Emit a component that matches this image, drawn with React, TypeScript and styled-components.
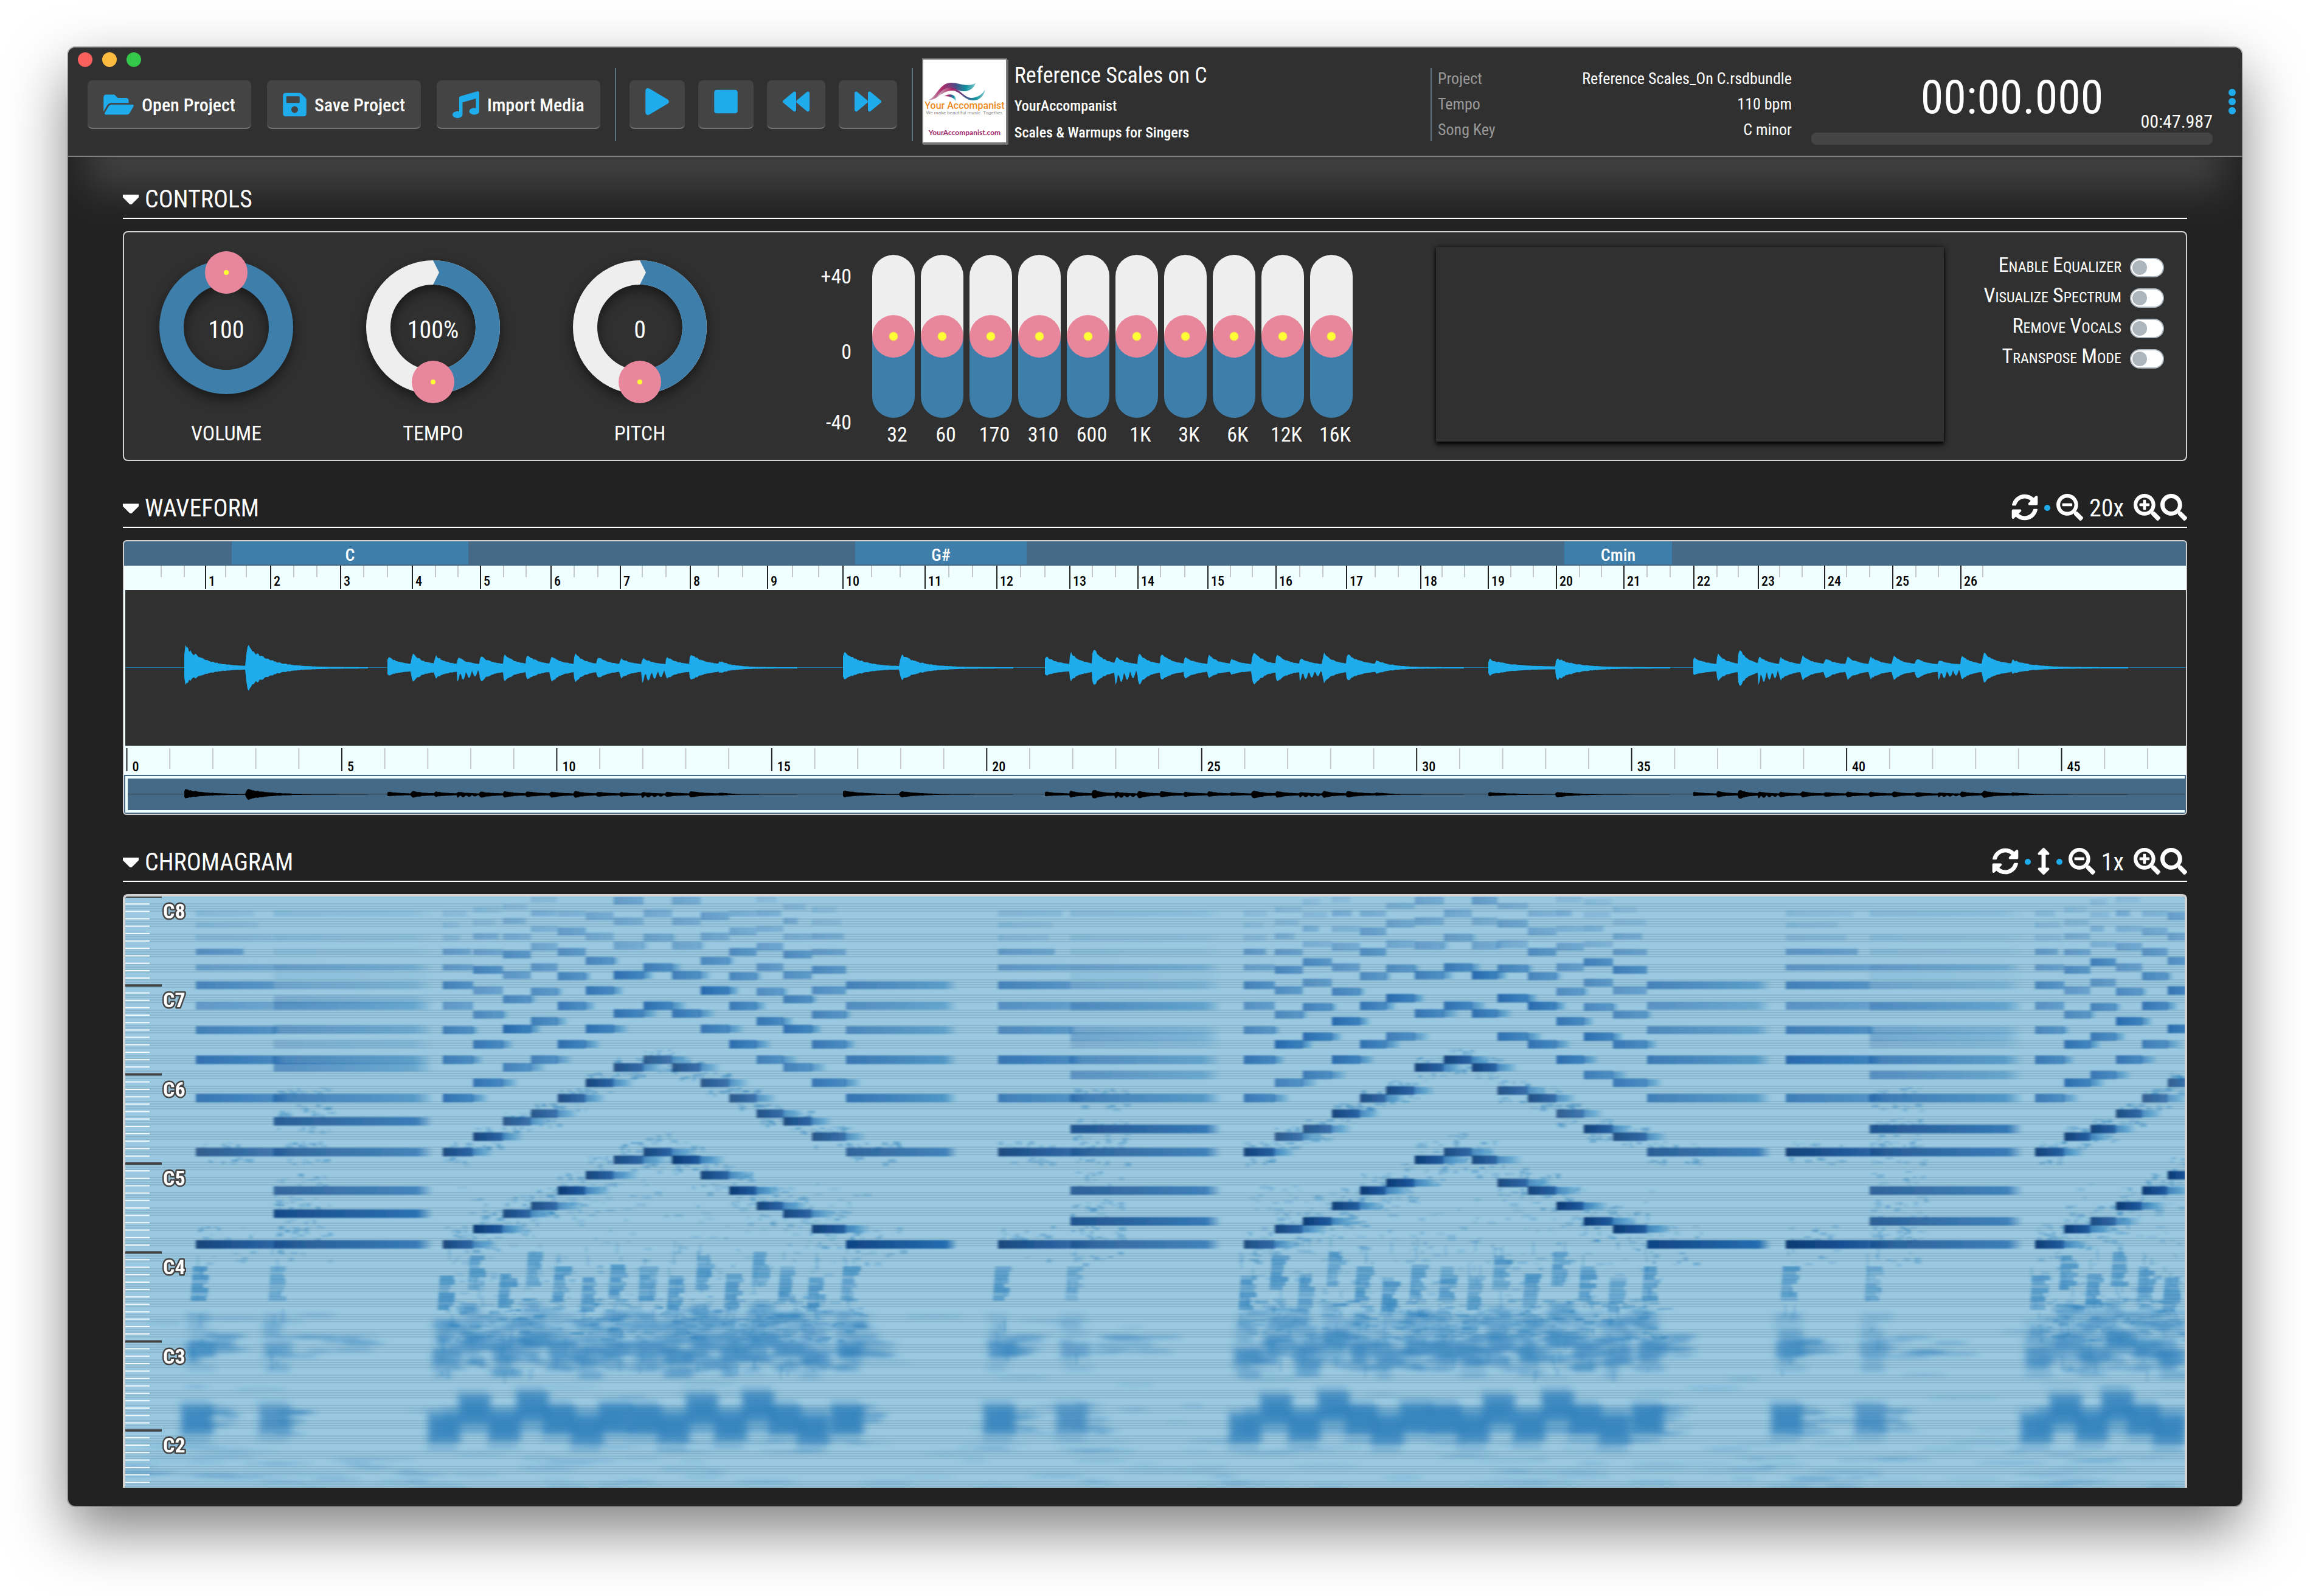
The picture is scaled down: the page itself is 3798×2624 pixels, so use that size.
import React from "react";
import styled, { createGlobalStyle } from "styled-components";
import {
  FaFolderOpen,
  FaSave,
  FaMusic,
  FaPlay,
  FaStop,
  FaBackward,
  FaForward,
  FaSyncAlt,
  FaSearch,
  FaSearchMinus,
  FaSearchPlus,
  FaArrowsAltV,
} from "react-icons/fa";

const color = {
  accent: "#1facec",
  panel: "#303030",
  page: "#222222",
  button: "#444444",
  line: "#7f7f7f",
  frame: "#d3d3d3",
  ruler: "#f0ffff",
  band: "#456a87",
  fill: "#3d7eaa",
  track: "#eeeeee",
  knob: "#e8879b",
  dot: "#ffff33",
};

const GlobalStyle = createGlobalStyle`
  *, *::before, *::after { box-sizing: border-box; }
  body {
    margin: 0;
    padding: 78px 112px 148px;
    background: #ffffff;
    color: #ffffff;
    font-family: "Roboto Condensed", Roboto, sans-serif;
  }
  button, input { font: inherit; color: inherit; }
`;

const Window = styled.div`
  background: ${color.page};
  border-radius: 12px;
  overflow: hidden;
  box-shadow: 0 0 0 2px rgba(0, 0, 0, 0.22), 0 40px 96px rgba(0, 0, 0, 0.5);
`;

/* ---------- header ---------- */

const Header = styled.header`
  display: flex;
  align-items: flex-start;
  padding: 8px 10px 18px 16px;
  background: ${color.panel};
  border-bottom: 2px solid ${color.line};
  box-shadow: 0 86px 60px -30px #404040;
`;

const Lights = styled.div`
  display: flex;
  gap: 16px;
  margin-bottom: 22px;
`;

const Light = styled.span<{ $color: string }>`
  width: 24px;
  height: 24px;
  border-radius: 50%;
  background: ${(p) => p.$color};
`;

const FileButtons = styled.div`
  display: flex;
  gap: 26px;
  padding-left: 16px;
`;

const Button = styled.button<{ $icon: number }>`
  display: flex;
  align-items: center;
  gap: 13px;
  height: 80px;
  padding: 2px 26px 0;
  border: 0;
  border-bottom: 2px solid #757575;
  border-radius: 8px;
  background: ${color.button};
  font-size: 30px;
  font-weight: 500;
  white-space: nowrap;

  svg {
    color: ${color.accent};
    width: ${(p) => p.$icon}px;
    height: 44px;
    flex: none;
  }
`;

const TransportButton = styled(Button)`
  align-items: flex-start;
  padding-top: 13px;
`;

const Deck = styled.div`
  flex: 1;
  display: flex;
  align-items: center;
  min-width: 0;
  height: 142px;
  margin: 10px 0 0 24px;
`;

const Divider = styled.div`
  flex: none;
  width: 2px;
  height: 120px;
  margin-top: 10px;
  background: #5f7280;
`;

const Transport = styled.div`
  display: flex;
  gap: 22px;
  margin: 10px 24px 0 22px;
`;

const Cover = styled.div`
  flex: none;
  width: 140px;
  height: 140px;
  margin-left: 15px;
  align-self: flex-start;
  background: #ffffff;
  border: 2px solid ${color.line};
  box-shadow: 2px 2px 0 #6d6d6d;

  svg {
    display: block;
  }
`;

const SongInfo = styled.div`
  flex: 1;
  min-width: 0;
  align-self: flex-start;
  padding-left: 12px;
  white-space: nowrap;
`;

const SongTitle = styled.h1`
  margin: 0;
  font-size: 36px;
  font-weight: 400;
  line-height: 56px;
`;

const SongLine = styled.p`
  margin: 0;
  font-size: 24px;
  font-weight: 500;
  line-height: 44px;
`;

const Facts = styled.dl`
  display: grid;
  grid-template-columns: auto 1fr;
  width: 582px;
  margin: 8px 0 0 10px;
  font-size: 26px;
  line-height: 42px;
`;

const FactName = styled.dt`
  color: #999999;
`;

const FactValue = styled.dd`
  margin: 0;
  text-align: right;
`;

const Clock = styled.div`
  width: 660px;
  margin: 39px 26px 0 32px;
  align-self: flex-start;
`;

const Elapsed = styled.div`
  font-size: 76px;
  line-height: 50px;
  text-align: center;
`;

const Total = styled.div`
  font-size: 30px;
  line-height: 30px;
  text-align: right;
`;

const Progress = styled.progress`
  appearance: none;
  display: block;
  width: 100%;
  height: 20px;
  margin-top: 3px;
  border: 0;
  border-radius: 8px;
  background: ${color.button};
  overflow: hidden;

  &::-webkit-progress-bar {
    background: ${color.button};
  }
  &::-webkit-progress-value {
    background: ${color.accent};
  }
`;

const MenuButton = styled.button`
  display: flex;
  flex-direction: column;
  gap: 3px;
  padding: 0;
  border: 0;
  background: none;
`;

const MenuDot = styled.span`
  width: 12px;
  height: 12px;
  border-radius: 50%;
  background: ${color.accent};
`;

/* ---------- sections ---------- */

const Main = styled.main`
  display: flex;
  flex-direction: column;
  gap: 54px;
  padding: 46px 90px 30px;
`;

const SectionHead = styled.div`
  display: flex;
  justify-content: space-between;
  padding-bottom: 6px;
  margin-bottom: 20px;
  border-bottom: 2px solid #ffffff;
`;

const Collapse = styled.button`
  display: flex;
  align-items: center;
  gap: 10px;
  padding: 0;
  border: 0;
  background: none;
  font-size: 40px;
  line-height: 48px;
`;

const SectionTitle = styled.h2`
  margin: 0;
  font: inherit;
`;

const Tools = styled.div`
  display: flex;
  align-items: flex-start;
  gap: 10px;
  font-size: 40px;
  line-height: 48px;
`;

const ToolButton = styled.button<{ $icon?: number }>`
  display: block;
  padding: 0;
  border: 0;
  background: none;

  svg {
    display: block;
    width: ${(p) => p.$icon ?? 44}px;
    height: 44px;
  }
`;

const ToolDot = styled.span`
  width: 10px;
  height: 10px;
  margin-top: 18px;
  border-radius: 50%;
  background: ${color.accent};
`;

const ZoomValue = styled.span`
  margin-right: 6px;
`;

const ToolPair = styled.div`
  display: flex;
`;

/* ---------- controls ---------- */

const ControlsPanel = styled.div`
  display: flex;
  align-items: flex-start;
  padding: 24px 36px 22px 58px;
  border: 2px solid ${color.frame};
  border-radius: 8px;
  background: ${color.panel};
`;

const Dials = styled.div`
  display: flex;
  gap: 120px;
  padding-top: 22px;
`;

const DialBox = styled.label`
  display: grid;
  justify-items: center;
  row-gap: 44px;
  width: 220px;
  font-size: 34px;
  line-height: 40px;

  svg,
  input {
    grid-area: 1 / 1;
    width: 220px;
    height: 220px;
    margin: 0;
  }
  svg {
    overflow: visible;
  }
  input {
    opacity: 0;
  }
`;

const Ring = styled.g`
  filter: drop-shadow(0 8px 10px rgba(0, 0, 0, 0.5));
`;

const DialValue = styled.text`
  font-size: 40px;
  fill: #ffffff;
  text-anchor: middle;
`;

const Equalizer = styled.div`
  display: flex;
  gap: 34px;
  margin: 13px 0 0 182px;
  font-size: 34px;
  line-height: 40px;
`;

const Scale = styled.div`
  display: grid;
  grid-template-rows: 124px 116px 40px;
  width: 56px;
  padding-top: 15px;
  text-align: right;
`;

const Bands = styled.div`
  display: flex;
  gap: 10px;
`;

const Band = styled.label`
  display: flex;
  flex-direction: column;
  gap: 7px;
  width: 70px;
`;

const BandName = styled.span`
  padding-left: 12px;
  text-align: center;
  white-space: nowrap;
`;

const BandSlider = styled.input`
  appearance: none;
  writing-mode: vertical-lr;
  direction: rtl;
  display: block;
  width: 70px;
  height: 268px;
  margin: 0;
  border-radius: 35px;
  background: linear-gradient(${color.track} 50%, ${color.fill} 50%);

  &::-webkit-slider-thumb {
    appearance: none;
    width: 70px;
    height: 70px;
    border-radius: 50%;
    background: radial-gradient(circle, ${color.dot} 6px, ${color.knob} 8px);
  }
`;

const Spectrum = styled.div`
  flex: 1;
  height: 320px;
  margin: 0 62px 0 137px;
  background: ${color.panel};
  box-shadow: 0 5px 7px rgba(0, 0, 0, 0.85), 0 0 6px rgba(0, 0, 0, 0.7);
`;

const Switches = styled.div`
  width: 300px;
  padding-top: 6px;
`;

const SwitchRow = styled.label`
  display: flex;
  align-items: center;
  justify-content: flex-end;
  gap: 14px;
  height: 50px;
`;

const SwitchName = styled.span`
  display: flex;
  align-items: baseline;
  gap: 7px;
  font-size: 24px;
  line-height: 50px;
  text-transform: uppercase;
  white-space: nowrap;
`;

const Word = styled.span`
  display: inline-block;

  &::first-letter {
    font-size: 34px;
  }
`;

const Switch = styled.input`
  appearance: none;
  flex: none;
  display: flex;
  width: 56px;
  height: 32px;
  margin: 6px 0 0;
  padding: 2px;
  border: 2px solid #adb5bd;
  border-radius: 16px;
  background: #ffffff;

  &::before {
    content: "";
    width: 24px;
    height: 24px;
    border-radius: 50%;
    background: #adb5bd;
  }
  &:checked {
    justify-content: flex-end;
  }
`;

/* ---------- waveform ---------- */

const WavePanel = styled.div`
  border: 2px solid ${color.frame};
  border-radius: 6px;
  background: ${color.ruler};
  overflow: hidden;

  svg {
    display: block;
  }
`;

const KeyBand = styled.div`
  display: flex;
  height: 40px;
  background: ${color.band};
`;

const KeySpan = styled.div<{ $size: number; $named: boolean }>`
  flex: ${(p) => p.$size} 0 0;
  height: 38px;
  background: ${(p) => (p.$named ? color.fill : "none")};
  font-size: 28px;
  font-weight: 500;
  line-height: 46px;
  text-align: center;
`;

const Ruler = styled.svg<{ $height: number }>`
  width: 100%;
  height: ${(p) => p.$height}px;
`;

const RulerText = styled.text`
  font-size: 22px;
  font-weight: 500;
  fill: #000000;
`;

const WaveView = styled.div`
  margin-left: 2px;
  background: ${color.panel};
`;

const Overview = styled.div`
  padding: 2px;
  background: ${color.band};
`;

const Viewport = styled.div`
  border: 4px solid ${color.ruler};
  border-right: 0;
`;

/* ---------- chromagram ---------- */

const ChromaPanel = styled.div`
  position: relative;
  border: 4px solid ${color.frame};
  border-bottom: 0;
  border-radius: 8px 8px 0 0;
  overflow: hidden;

  svg {
    display: block;
    width: 100%;
    height: 972px;
  }
`;

const OctaveScale = styled.div`
  position: absolute;
  inset: 0;
`;

const OctaveText = styled.text`
  font-size: 34px;
  font-weight: 700;
  fill: #ffffff;
  stroke: #444444;
  stroke-width: 5px;
  stroke-linejoin: round;
  paint-order: stroke;
`;

/* ---------- data ---------- */

function makeRandom(seed: number) {
  let s = seed;
  return () => {
    s = (s * 1664525 + 1013904223) % 4294967296;
    return s / 4294967296;
  };
}

const PANEL_LEFT = 204;
const PANEL_WIDTH = 3390;
const pct = (x: number) => `${((x - PANEL_LEFT) / PANEL_WIDTH) * 100}%`;

const keySpans: [number, string][] = [
  [177, ""],
  [389, "C"],
  [636, ""],
  [282, "G#"],
  [884, ""],
  [177, "Cmin"],
  [845, ""],
];

const barTicks = [
  338, 445, 560, 678, 790, 906, 1020, 1135, 1262, 1386, 1521, 1639, 1759, 1871, 1986, 2098, 2214,
  2336, 2447, 2559, 2670, 2785, 2891, 3000, 3112, 3224,
];

const beatTicks = [
  265, 303, 371, 405, 483, 521, 598, 637, 716, 753, 828, 865, 944, 983, 1056, 1095, 1181, 1221,
  1303, 1346, 1433, 1480, 1560, 1599, 1678, 1718, 1796, 1834, 1908, 1948, 2023, 2059, 2137, 2175,
  2261, 2299, 2371, 2408, 2484, 2521, 2597, 2633, 2708, 2746, 2823, 2858, 2926, 2963, 3036, 3074,
  3150, 3187, 3260,
];

type Pluck = [x: number, up: number, down: number, ripple?: boolean];

const phrases: { end: number; rest: number; plucks: Pluck[] }[] = [
  { end: 606, rest: 2, plucks: [[303, 38, 28], [405, 40, 40]] },
  {
    end: 1313,
    rest: 5,
    plucks: [
      [637, 20, 14], [677, 26, 25], [715, 22, 19], [752, 19, 23, true], [789, 21, 25],
      [828, 25, 25], [865, 24, 22], [905, 21, 26], [944, 25, 25], [982, 20, 19], [1020, 17, 19],
      [1056, 17, 25, true], [1095, 20, 20], [1134, 25, 23], [1181, 13, 10],
    ],
  },
  { end: 1668, rest: 2, plucks: [[1386, 30, 22], [1480, 24, 22]] },
  {
    end: 2408,
    rest: 5,
    plucks: [
      [1718, 21, 14], [1759, 28, 24], [1796, 35, 33], [1834, 19, 28, true], [1871, 26, 31],
      [1908, 26, 23], [1947, 20, 20], [1986, 23, 18], [2023, 16, 12], [2059, 29, 32],
      [2098, 25, 26], [2137, 17, 22, true], [2175, 26, 26], [2214, 25, 23], [2261, 14, 11],
    ],
  },
  { end: 2748, rest: 2, plucks: [[2447, 15, 13], [2558, 17, 22]] },
  {
    end: 3500,
    rest: 5,
    plucks: [
      [2784, 19, 13], [2823, 25, 23], [2858, 34, 35], [2891, 20, 28, true], [2926, 19, 22],
      [2962, 22, 22], [3000, 17, 20], [3036, 20, 21], [3074, 20, 20], [3112, 21, 21],
      [3150, 16, 19], [3187, 14, 20, true], [3224, 22, 21], [3260, 27, 26], [3307, 14, 10],
    ],
  },
];

function wavePath(left: number, mid: number, gain: number) {
  const random = makeRandom(7);
  return phrases
    .map(({ end, rest, plucks }) => {
      const top: string[] = [];
      const bottom: string[] = [];
      const dense = plucks.length > 2;
      plucks.forEach(([x, up, down, ripple], i) => {
        const last = i === plucks.length - 1;
        const next = last ? end : plucks[i + 1][0];
        const floor = last ? 1 : rest;
        const rate = last ? 6 : dense ? 1.9 : 3;
        for (let at = x; at < next; at += 2) {
          const t = (at - x) / (next - x);
          const attack = at === x ? 0.6 : 1;
          const decay = Math.exp(-rate * t) * (0.86 + random() * 0.22) * attack * (last ? 1 : 1 - 0.3 * t);
          const wobble = ripple ? 0.25 + 0.75 * Math.abs(Math.cos(t * 12)) : 1;
          const upper = floor + (up - floor) * decay;
          const lower = floor + (down - floor) * (ripple ? Math.exp(-0.8 * t) : decay);
          top.push(`${at - left},${(mid - upper * gain).toFixed(1)}`);
          bottom.unshift(`${at - left},${(mid + lower * gain * wobble).toFixed(1)}`);
        }
      });
      return `M${top.join("L")}L${bottom.join("L")}Z`;
    })
    .join("");
}

const bigWave = wavePath(206, 128, 1);
const smallWave = wavePath(210, 26, 0.24);

/* Spectrogram: each note is drawn with its first twelve partials. */

const CHROMA_LEFT = 206;
const CHROMA_WIDTH = 3386;
const CHROMA_HEIGHT = 972;
const OCTAVE = 151.8;
const ROOT_Y = 572;

type Note = { x: number; end: number; semi: number; kind: "root" | "scale" | "held" | "chord" };

const major = [0, 2, 4, 5, 7, 9, 11, 12, 11, 9, 7, 5, 4, 2, 0];
const minor = [0, 2, 3, 5, 7, 8, 11, 12, 11, 8, 7, 5, 3, 2, 0];

function scaleNotes(starts: number[], semis: number[], end: number): Note[] {
  return starts.map((x, i) => ({
    x,
    end: i + 1 < starts.length ? starts[i + 1] : end,
    semi: semis[i],
    kind: i === 14 ? "held" : "scale",
  }));
}

function chordNotes(x: number, end: number, semis: number[]): Note[] {
  return semis.map((semi) => ({ x, end, semi, kind: "chord" as const }));
}

const notes: Note[] = [
  { x: 322, end: 450, semi: 0, kind: "root" },
  ...chordNotes(450, 712, [0, 4, 7]),
  ...scaleNotes(
    [728, 778, 827, 873, 917, 963, 1009, 1058, 1105, 1152, 1199, 1244, 1288, 1335, 1391],
    major,
    1574,
  ),
  { x: 1641, end: 1760, semi: 0, kind: "root" },
  ...chordNotes(1760, 2008, [0, 3, 7]),
  ...scaleNotes(
    [2045, 2096, 2142, 2190, 2236, 2279, 2326, 2374, 2420, 2462, 2512, 2559, 2604, 2652, 2708],
    minor,
    2912,
  ),
  { x: 2936, end: 3074, semi: 0, kind: "root" },
  ...chordNotes(3074, 3326, [0, 3, 7]),
  ...scaleNotes([3346, 3394, 3437, 3479, 3522, 3564], [0, 2, 3, 5, 7, 9], 3600),
];

const partialLevel = [1, 0.86, 0.8, 0.84, 0.66, 0.54, 0.66, 0.44, 0.5, 0.28, 0.22, 0.28];
const chordLevel: Record<number, number[]> = {
  0: [0.8, 0.8, 0.7, 0.62, 0.3, 0.5, 0.3, 0.42, 0.1, 0.18, 0, 0.26],
  3: [0.86, 0.78, 0.5, 0.3, 0.2, 0, 0, 0, 0, 0, 0, 0],
  4: [0.86, 0.78, 0.5, 0.3, 0.2, 0, 0, 0, 0, 0, 0, 0],
  7: [0.72, 0.1, 0.2, 0.12, 0.08, 0, 0, 0, 0, 0, 0, 0],
};

type Bar = { x: number; y: number; w: number; h: number; o: number; tone: string };
type Smear = { x: number; y: number; rx: number; ry: number; o: number };

const bars: Bar[] = [];
const specks: Bar[] = [];
const smears: Smear[] = [];
const blocks: Bar[] = [];
const streaks: Bar[] = [];

(function synthesise() {
  const random = makeRandom(42);
  const between = (a: number, b: number) => a + (b - a) * random();
  let step = 0;

  notes.forEach((note) => {
    const x = note.x - CHROMA_LEFT;
    const w = note.end - note.x;
    const levels = note.kind === "chord" ? chordLevel[note.semi] : partialLevel;

    levels.forEach((level, i) => {
      const y = ROOT_Y - OCTAVE * (note.semi / 12 + Math.log2(i + 1));
      if (y < 4 || level === 0) return;
      const long = note.kind === "held" || note.kind === "chord";
      if (note.kind === "held" && i > 6) return;
      const faint = y < 90 ? 0.6 : 1;
      const o = Math.min(1, level * faint * between(0.85, 1.1));
      const h = i < 4 ? 14 : i < 7 ? 13 : 10;
      const trim = i > 7 && !long ? between(0.5, 1) : 1;
      bars.push({
        x,
        y: y - h / 2,
        w: w * trim,
        h,
        o,
        tone: long ? (i < 2 ? "longDark" : "longMid") : i < 2 ? "dark" : "mid",
      });
      if (i < 5 && !long) {
        bars.push({ x: x + w - 2, y: y - h / 2 + 1, w: 44 - i * 8, h: h - 2, o: o * 0.8, tone: "tail" });
      }
      if (i < 2) {
        const count = long ? 24 : 18;
        for (let k = 0; k < count; k++) {
          const away = between(8, i === 0 ? 32 : 18) * (random() < 0.6 ? -1 : 1);
          specks.push({
            x: x + between(0, Math.min(w, 90)),
            y: y + away,
            w: between(4, 12),
            h: between(2, 7),
            o: between(0.12, 0.4),
            tone: "",
          });
        }
      }
    });

    if (note.kind === "chord" && note.semi !== 0) return;
    const inScale = note.kind === "scale";
    step = inScale ? step + 1 : 0;
    const soft = note.kind === "chord" ? 0.7 : 1;
    const shift = inScale ? [0, 10, -12, 8, -16, 0, 12, -2][step % 8] : 0;

    for (let k = 0; k < 8; k++) {
      streaks.push({
        x: x - 5 - k / 2,
        y: 608 + shift * 1.5 + k * 7,
        w: between(16, 30),
        h: 8,
        o: between(0.3, 0.7) * soft,
        tone: "",
      });
    }
    for (let k = 0; k < 9; k++) {
      streaks.push({ x: x + between(-8, 14), y: between(560, 780), w: 4, h: between(6, 24), o: 0.22, tone: "" });
    }
    for (let k = 0; k < 7; k++) {
      blocks.push({
        x: x - 14 + between(-6, 4),
        y: 684 + k * 14 + shift,
        w: between(22, 50),
        h: 14,
        o: between(0.15, 0.5) * soft,
        tone: "",
      });
    }
    blocks.push({ x: x - 16, y: 732 + shift, w: 48, h: 26, o: 0.5 * soft, tone: "" });
    blocks.push({ x: x - 24, y: 836 + shift * 1.4, w: 54, h: 48, o: 0.6 * soft, tone: "" });
    blocks.push({ x: x - 18, y: 846 + shift * 1.4, w: 40, h: 28, o: 0.5 * soft, tone: "" });
    blocks.push({ x: x - 26, y: 826 + shift * 1.4, w: 50, h: 72, o: 0.25 * soft, tone: "" });
    if (!inScale) {
      for (let k = 0; k < 9; k++) {
        smears.push({
          x: x + between(20, note.kind === "chord" ? 150 : 60),
          y: between(720, 756),
          rx: between(18, 40),
          ry: 4,
          o: 0.28,
        });
        smears.push({ x: x + between(24, 60), y: between(836, 884), rx: between(12, 26), ry: 4, o: 0.25 });
      }
    }
  });

  [[728, 1420], [2045, 2730], [3346, 3600]].forEach(([from, to]) => {
    const count = (to - from) / 3;
    for (let k = 0; k < count; k++) {
      smears.push({
        x: between(from, to) - CHROMA_LEFT,
        y: between(680, 780),
        rx: between(8, 22),
        ry: between(3, 5),
        o: between(0.12, 0.36),
      });
    }
    for (let k = 0; k < count; k++) {
      specks.push({
        x: between(from, to) - CHROMA_LEFT,
        y: between(660, 730),
        w: between(6, 26),
        h: between(3, 6),
        o: between(0.15, 0.4),
        tone: "",
      });
    }
    for (let k = 0; k < count; k++) {
      specks.push({
        x: between(from, to) - CHROMA_LEFT,
        y: between(470, 700),
        w: between(4, 16),
        h: between(3, 6),
        o: between(0.1, 0.28),
        tone: "",
      });
    }
    blocks.push({ x: from - CHROMA_LEFT, y: 838, w: to - from, h: 46, o: 0.28, tone: "" });
  });

  for (let k = 0; k < 240; k++) {
    smears.push({
      x: between(0, CHROMA_WIDTH),
      y: k % 3 === 0 ? between(680, 900) : between(895, 970),
      rx: between(14, 60),
      ry: 3,
      o: between(0.08, 0.26),
    });
  }
})();

const songFacts = [
  ["Project", "Reference Scales_On C.rsdbundle"],
  ["Tempo", "110 bpm"],
  ["Song Key", "C minor"],
];

const bands = ["32", "60", "170", "310", "600", "1K", "3K", "6K", "12K", "16K"];
const switches = ["Enable Equalizer", "Visualize Spectrum", "Remove Vocals", "Transpose Mode"];
const seconds = Array.from({ length: 48 }, (_, i) => i);
const octaves = [8, 7, 6, 5, 4, 3, 2];
const semitones = Array.from({ length: 80 }, (_, i) => i);

/* ---------- components ---------- */

function CoverArt() {
  return (
    <svg width="136" height="136" viewBox="0 0 136 136" role="img" aria-label="Your Accompanist">
      <defs>
        <linearGradient id="wing" x1="0" x2="1">
          <stop offset="0" stopColor="#c8bfc6" />
          <stop offset="0.3" stopColor="#b02a6b" />
          <stop offset="0.58" stopColor="#4f4a86" />
          <stop offset="0.8" stopColor="#12929f" />
          <stop offset="1" stopColor="#7fc8cd" />
        </linearGradient>
      </defs>
      <g fill="url(#wing)">
        <path d="M7 67C22 63 26 38 46 38c14 0 24 8 40 1-3 8-10 13-19 13-11 0-18-8-27-4C30 52 24 67 7 67Z" />
        <path d="M22 61c8-11 14-16 24-15 14 1 22 18 34 17 10-1 17-6 22-14-3 12-10 18-20 18-14 0-20-14-33-16-10-1-17 5-27 10Z" />
        <path d="M34 60c10-6 22-2 19 8-2-5-9-8-19-8Z" />
      </g>
      <text x="68" y="81" textAnchor="middle" fill="#ee8a1d" fontFamily="Roboto, sans-serif" fontWeight="500" fontSize="16">
        Your Accompanist
      </text>
      <text x="68" y="90" textAnchor="middle" fill="#8a8a8a" fontFamily="Roboto, sans-serif" fontSize="8">
        We make beautiful music. Together.
      </text>
      <text x="68" y="124" textAnchor="middle" fill="#9d2b6d" fontFamily="Lato, sans-serif" fontWeight="700" fontSize="12">
        YourAccompanist.com
      </text>
    </svg>
  );
}

function SectionHeader({ title, children }: { title: string; children?: React.ReactNode }) {
  return (
    <SectionHead>
      <Collapse type="button">
        <svg width="26" height="16" viewBox="31 191 258 163" fill="currentColor" aria-hidden="true">
          <path d="M31.3 192h257.3c17.8 0 26.7 21.5 14.1 34.1L174.1 354.8c-7.8 7.8-20.5 7.8-28.3 0L17.2 226.1C4.6 213.5 13.5 192 31.3 192z" />
        </svg>
        <SectionTitle>{title}</SectionTitle>
      </Collapse>
      {children}
    </SectionHead>
  );
}

function Dial({ name, value, half }: { name: string; value: string; half: boolean }) {
  return (
    <DialBox>
      <svg viewBox="0 0 220 220" aria-hidden="true">
        <Ring>
          <circle cx="110" cy="110" r="90" fill="none" strokeWidth="40" stroke={half ? color.track : color.fill} />
          {half && (
            <path fill={color.fill} d="M110 0A110 110 0 0 1 110 220V180A70 70 0 0 0 110 40L120 20Z" />
          )}
        </Ring>
        <circle cx="110" cy={half ? 200 : 20} r="35" fill={color.knob} />
        <circle cx="110" cy={half ? 200 : 20} r="4" fill={color.dot} />
        <DialValue x="110" y="128">
          {value}
        </DialValue>
      </svg>
      <input type="range" min="0" max="100" defaultValue={half ? 50 : 100} />
      <span>{name}</span>
    </DialBox>
  );
}

function BarRuler() {
  return (
    <Ruler $height={40}>
      {beatTicks.map((x) => (
        <line key={x} x1={pct(x)} x2={pct(x)} y1="0" y2="19" stroke="#c4c8c8" strokeWidth="2" />
      ))}
      {barTicks.map((x, i) => (
        <React.Fragment key={x}>
          <line x1={pct(x)} x2={pct(x)} y1="0" y2="38" stroke="#222222" strokeWidth="2" />
          <RulerText x={pct(x)} dx="5" y="33">
            {i + 1}
          </RulerText>
        </React.Fragment>
      ))}
    </Ruler>
  );
}

function TimeRuler() {
  return (
    <Ruler $height={48}>
      {seconds.map((s) => {
        const x = pct(208.5 + s * 70.69);
        const major = s % 5 === 0;
        return (
          <React.Fragment key={s}>
            <line
              x1={x}
              x2={x}
              y1="4"
              y2={major ? 42 : 38}
              stroke={major ? "#222222" : "#c4c8c8"}
              strokeWidth="2"
            />
            {major && (
              <RulerText x={x} dx="9" y="42">
                {s}
              </RulerText>
            )}
          </React.Fragment>
        );
      })}
    </Ruler>
  );
}

function gradient(id: string, from: string, to: string, fade: number) {
  return (
    <linearGradient id={id}>
      <stop offset="0" stopColor={from} />
      <stop offset={fade} stopColor={to} />
      <stop offset="1" stopColor={to} stopOpacity={id.startsWith("long") || id === "tail" ? 0 : 0.9} />
    </linearGradient>
  );
}

function Chromagram() {
  return (
    <svg
      viewBox={`0 0 ${CHROMA_WIDTH} ${CHROMA_HEIGHT}`}
      preserveAspectRatio="none"
      role="img"
      aria-label="Chromagram"
    >
      <defs>
        <pattern id="rows" width="8" height="25" patternUnits="userSpaceOnUse">
          <rect width="8" height="25" fill="#9ac8e0" />
          <path d="M0 11h8v2H0zM0 15h8v2H0zM0 19h8v2H0zM0 23h8v2H0z" fill="#8bb7ce" />
        </pattern>
        {gradient("dark", "#0c3a72", "#175195", 0.7)}
        {gradient("mid", "#1d60a8", "#2b74b6", 0.7)}
        {gradient("tail", "#246cb0", "#4b97c8", 0.5)}
        {gradient("longDark", "#0f4484", "#256db0", 0.9)}
        {gradient("longMid", "#1d60a8", "#3d8bc0", 0.88)}
        <filter id="soft" x="-5%" y="-5%" width="110%" height="110%">
          <feGaussianBlur stdDeviation="2 1" />
        </filter>
        <filter id="haze" x="-5%" y="-5%" width="110%" height="110%">
          <feGaussianBlur stdDeviation="6 3" />
        </filter>
      </defs>
      <rect width={CHROMA_WIDTH} height={CHROMA_HEIGHT} fill="url(#rows)" />
      <g filter="url(#haze)" fill="#2f7fbb">
        {smears.map((s, i) => (
          <ellipse key={i} cx={s.x} cy={s.y} rx={s.rx} ry={s.ry} opacity={s.o} />
        ))}
        {blocks.map((s, i) => (
          <rect key={i} x={s.x} y={s.y} width={s.w} height={s.h} opacity={s.o} />
        ))}
      </g>
      <g filter="url(#soft)" fill="#3384bd">
        {streaks.concat(specks).map((s, i) => (
          <rect key={i} x={s.x} y={s.y} width={s.w} height={s.h} opacity={s.o} />
        ))}
      </g>
      <g filter="url(#soft)">
        {bars.map((b, i) => (
          <rect key={i} x={b.x} y={b.y} width={b.w} height={b.h} opacity={b.o} fill={`url(#${b.tone})`} />
        ))}
      </g>
    </svg>
  );
}

function OctaveRuler() {
  return (
    <OctaveScale>
      <svg>
        {semitones.map((i) => (
          <line key={i} x1="0" x2="40" y1={i * 12.19} y2={i * 12.19} stroke="#f2fafd" strokeWidth="2" />
        ))}
        {octaves.map((n, i) => (
          <React.Fragment key={n}>
            <line x1="0" x2="60" y1={i * 146.3} y2={i * 146.3} stroke="#444444" strokeWidth="4" />
            <OctaveText x="62" y={i * 146.3 + 36}>
              C{n}
            </OctaveText>
          </React.Fragment>
        ))}
      </svg>
    </OctaveScale>
  );
}

export default function App() {
  return (
    <>
      <GlobalStyle />
      <Window>
        <Header>
          <div>
            <Lights>
              <Light $color="#fc605c" />
              <Light $color="#fdbc40" />
              <Light $color="#34c84a" />
            </Lights>
            <FileButtons>
              <Button type="button" $icon={50}>
                <FaFolderOpen />
                Open Project
              </Button>
              <Button type="button" $icon={39}>
                <FaSave />
                Save Project
              </Button>
              <Button type="button" $icon={44}>
                <FaMusic />
                Import Media
              </Button>
            </FileButtons>
          </div>
          <Deck>
            <Divider />
            <Transport>
              <TransportButton type="button" aria-label="Play" $icon={39}>
                <FaPlay />
              </TransportButton>
              <TransportButton type="button" aria-label="Stop" $icon={39}>
                <FaStop />
              </TransportButton>
              <TransportButton type="button" aria-label="Rewind" $icon={44}>
                <FaBackward />
              </TransportButton>
              <TransportButton type="button" aria-label="Forward" $icon={44}>
                <FaForward />
              </TransportButton>
            </Transport>
            <Divider />
            <Cover>
              <CoverArt />
            </Cover>
            <SongInfo>
              <SongTitle>Reference Scales on C</SongTitle>
              <SongLine>YourAccompanist</SongLine>
              <SongLine>Scales &amp; Warmups for Singers</SongLine>
            </SongInfo>
            <Divider />
            <Facts>
              {songFacts.map(([name, value]) => (
                <React.Fragment key={name}>
                  <FactName>{name}</FactName>
                  <FactValue>{value}</FactValue>
                </React.Fragment>
              ))}
            </Facts>
            <Clock>
              <Elapsed>00:00.000</Elapsed>
              <Total>00:47.987</Total>
              <Progress value={0} max={47.987} aria-label="Playback position" />
            </Clock>
            <MenuButton type="button" aria-label="Menu">
              <MenuDot />
              <MenuDot />
              <MenuDot />
            </MenuButton>
          </Deck>
        </Header>

        <Main>
          <section>
            <SectionHeader title="CONTROLS" />
            <ControlsPanel>
              <Dials>
                <Dial name="VOLUME" value="100" half={false} />
                <Dial name="TEMPO" value="100%" half />
                <Dial name="PITCH" value="0" half />
              </Dials>
              <Equalizer>
                <Scale>
                  <span>+40</span>
                  <span>0</span>
                  <span>-40</span>
                </Scale>
                <Bands>
                  {bands.map((name) => (
                    <Band key={name}>
                      <BandSlider type="range" min="-40" max="40" defaultValue="0" />
                      <BandName>{name}</BandName>
                    </Band>
                  ))}
                </Bands>
              </Equalizer>
              <Spectrum />
              <Switches>
                {switches.map((name) => (
                  <SwitchRow key={name}>
                    <SwitchName>
                      {name.split(" ").map((word) => (
                        <Word key={word}>{word} </Word>
                      ))}
                    </SwitchName>
                    <Switch type="checkbox" role="switch" />
                  </SwitchRow>
                ))}
              </Switches>
            </ControlsPanel>
          </section>

          <section>
            <SectionHeader title="WAVEFORM">
              <Tools>
                <ToolButton type="button" aria-label="Reset waveform">
                  <FaSyncAlt />
                </ToolButton>
                <ToolDot />
                <ToolButton type="button" aria-label="Zoom out">
                  <FaSearchMinus />
                </ToolButton>
                <ZoomValue>20x</ZoomValue>
                <ToolPair>
                  <ToolButton type="button" aria-label="Zoom in">
                    <FaSearchPlus />
                  </ToolButton>
                  <ToolButton type="button" aria-label="Fit">
                    <FaSearch />
                  </ToolButton>
                </ToolPair>
              </Tools>
            </SectionHeader>
            <WavePanel>
              <KeyBand>
                {keySpans.map(([size, name], i) => (
                  <KeySpan key={i} $size={size} $named={name !== ""}>
                    {name}
                  </KeySpan>
                ))}
              </KeyBand>
              <BarRuler />
              <WaveView>
                <svg width="100%" height="256" viewBox="0 0 3388 256" preserveAspectRatio="none" role="img" aria-label="Waveform">
                  <rect y="127" width="3388" height="1" fill="#23739a" />
                  <path d={bigWave} fill={color.accent} />
                </svg>
              </WaveView>
              <TimeRuler />
              <Overview>
                <Viewport>
                  <svg width="100%" height="52" viewBox="0 0 3382 52" preserveAspectRatio="none" role="img" aria-label="Waveform overview">
                    <rect y="25" width="3382" height="1" fill="#1b2a36" />
                    <path d={smallWave} fill="#000000" />
                  </svg>
                </Viewport>
              </Overview>
            </WavePanel>
          </section>

          <section>
            <SectionHeader title="CHROMAGRAM">
              <Tools>
                <ToolButton type="button" aria-label="Reset chromagram">
                  <FaSyncAlt />
                </ToolButton>
                <ToolDot />
                <ToolButton type="button" aria-label="Stretch vertically" $icon={22}>
                  <FaArrowsAltV />
                </ToolButton>
                <ToolDot />
                <ToolButton type="button" aria-label="Zoom out">
                  <FaSearchMinus />
                </ToolButton>
                <ZoomValue>1x</ZoomValue>
                <ToolPair>
                  <ToolButton type="button" aria-label="Zoom in">
                    <FaSearchPlus />
                  </ToolButton>
                  <ToolButton type="button" aria-label="Fit">
                    <FaSearch />
                  </ToolButton>
                </ToolPair>
              </Tools>
            </SectionHeader>
            <ChromaPanel>
              <Chromagram />
              <OctaveRuler />
            </ChromaPanel>
          </section>
        </Main>
      </Window>
    </>
  );
}
